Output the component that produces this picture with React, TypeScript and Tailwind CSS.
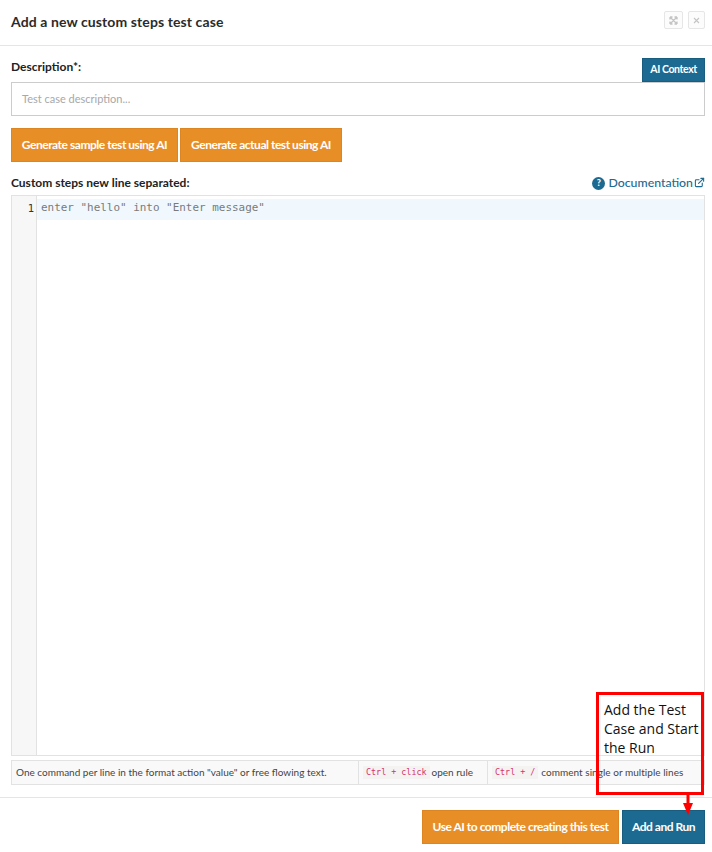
import { ExternalLink } from "lucide-react";

const orangeBtn =
  "h-[34px] bg-[#e88e26] border border-[#dd8520] text-white text-[12px] font-bold tracking-[-0.47px] flex items-center justify-center";
const blueBtn =
  "bg-[#1c6a91] border border-[#185d80] text-white font-bold flex items-center justify-center";
const kbd =
  "font-['DejaVu_Sans_Mono',monospace] text-[8.4px] text-[#d6336c] bg-[#f5f2f2] px-[3px] leading-[13px]";

export default function App() {
  return (
    <div className="relative w-[712px] h-[852px] bg-white font-['Lato',sans-serif] text-[#222] overflow-hidden">
      {/* Header */}
      <div className="h-[46px] border-b border-[#e5e5e5] pl-[11px] pr-[7px] flex items-center justify-between">
        <h1 className="text-[14px] font-bold text-[#2b2b2b] tracking-[0.1px] -mt-[2px]">Add a new custom steps test case</h1>
        <div className="flex gap-[5px] -mt-[5px]">
          <button className="w-[19px] h-[18px] border border-[#e6e6e6] rounded-[2px] bg-[#fcfcfc] flex items-center justify-center">
            <svg width="9" height="9" viewBox="0 0 9 9" fill="none" stroke="#c4c4c4" strokeWidth="1.3">
              <path d="M1 1l7 7M8 1L1 8M1 1h2.5M1 1v2.5M8 1H5.5M8 1v2.5M1 8h2.5M1 8V5.5M8 8H5.5M8 8V5.5" />
            </svg>
          </button>
          <button className="w-[17px] h-[18px] border border-[#e6e6e6] rounded-[2px] bg-[#fcfcfc] flex items-center justify-center">
            <svg width="7" height="7" viewBox="0 0 7 7" fill="none" stroke="#c4c4c4" strokeWidth="1.1">
              <path d="M1 1l5 5M6 1L1 6" />
            </svg>
          </button>
        </div>
      </div>

      <div className="px-[11px] pr-[7px]">
        {/* Description */}
        <div className="flex items-end justify-between h-[36px]">
          <label className="text-[12px] font-bold text-[#222] mb-[6px]">Description*:</label>
          <button className={`${blueBtn} w-[63px] h-[24px] text-[10.5px] tracking-[-0.4px]`}>AI Context</button>
        </div>
        <div className="h-[34px] border border-[#cccccc] flex items-center px-[10px] text-[11px] text-[#a8a8a8]">
          Test case description...
        </div>

        {/* AI buttons */}
        <div className="flex gap-[2px] mt-[12px]">
          <button className={`${orangeBtn} w-[167px]`}>Generate sample test using AI</button>
          <button className={`${orangeBtn} w-[162px]`}>Generate actual test using AI</button>
        </div>

        {/* Steps label */}
        <div className="flex items-center justify-between h-[33px]">
          <label className="text-[12px] font-bold text-[#222] mt-[9px]">Custom steps new line separated:</label>
          <a className="flex items-center text-[12.3px] font-medium text-[#1c6a91] mt-[9px]">
            <span className="w-[13px] h-[13px] rounded-full bg-[#1c6a91] text-white text-[9px] font-black flex items-center justify-center mr-[3px]">
              ?
            </span>
            Documentation
            <ExternalLink className="w-[11px] h-[11px] ml-[1px] -mt-[2px]" strokeWidth={2.4} />
          </a>
        </div>

        {/* Editor */}
        <div className="h-[561px] border border-[#e2e2e2] flex">
          <div className="w-[25px] shrink-0 bg-[#f7f7f7] border-r border-[#e2e2e2] pt-[2px] pr-[2px] text-right font-['DejaVu_Sans_Mono',monospace] text-[10.5px] leading-[20px] text-[#333]">
            1
          </div>
          <div className="flex-1 mt-[3px] h-[21px] bg-[#f0f8fe] pl-[4px] font-['DejaVu_Sans_Mono',monospace] text-[10.95px] leading-[18px] text-[#7a7a7a]">
            enter "hello" into "Enter message"
          </div>
        </div>

        {/* Hints */}
        <div className="h-[25px] mt-[4px] border border-[#e2e2e2] bg-[#f9f9f9] flex items-center text-[10px] text-[#444]">
          <div className="w-[347px] h-full pl-[4px] flex items-center border-r border-[#e2e2e2]">
            One command per line in the format action "value" or free flowing text.
          </div>
          <div className="w-[129px] h-full pl-[4px] flex items-center gap-[2px] border-r border-[#e2e2e2]">
            <span className={kbd}>Ctrl + click</span> open rule
          </div>
          <div className="flex-1 h-full pl-[4px] flex items-center gap-[3px]">
            <span className={kbd}>Ctrl + /</span> <span className="tracking-[0.03px]">comment single or multiple lines</span>
          </div>
        </div>
      </div>

      {/* Footer */}
      <div className="mt-[12px] border-t border-[#e5e5e5] pt-[12px] pr-[7px] flex justify-end gap-[3px]">
        <button className={`${orangeBtn} w-[197px]`}>Use AI to complete creating this test</button>
        <button className={`${blueBtn} w-[83px] h-[34px] text-[12px] tracking-[-0.47px]`}>Add and Run</button>
      </div>

      {/* Annotation over the page */}
      <div className="absolute left-[596px] top-[692px] w-[108px] h-[103px] border-[3px] border-[#ff0000] pl-[5px] pt-[5px] font-['Open_Sans',sans-serif] text-[14px] leading-[19px] text-[#111]">
        Add the Test Case and Start the Run
      </div>
      <svg className="absolute left-[682px] top-[795px]" width="12" height="21" viewBox="0 0 12 21" fill="#ff0000">
        <rect x="4.5" y="0" width="3" height="10" />
        <path d="M1 8h10L6 20z" />
      </svg>
    </div>
  );
}
